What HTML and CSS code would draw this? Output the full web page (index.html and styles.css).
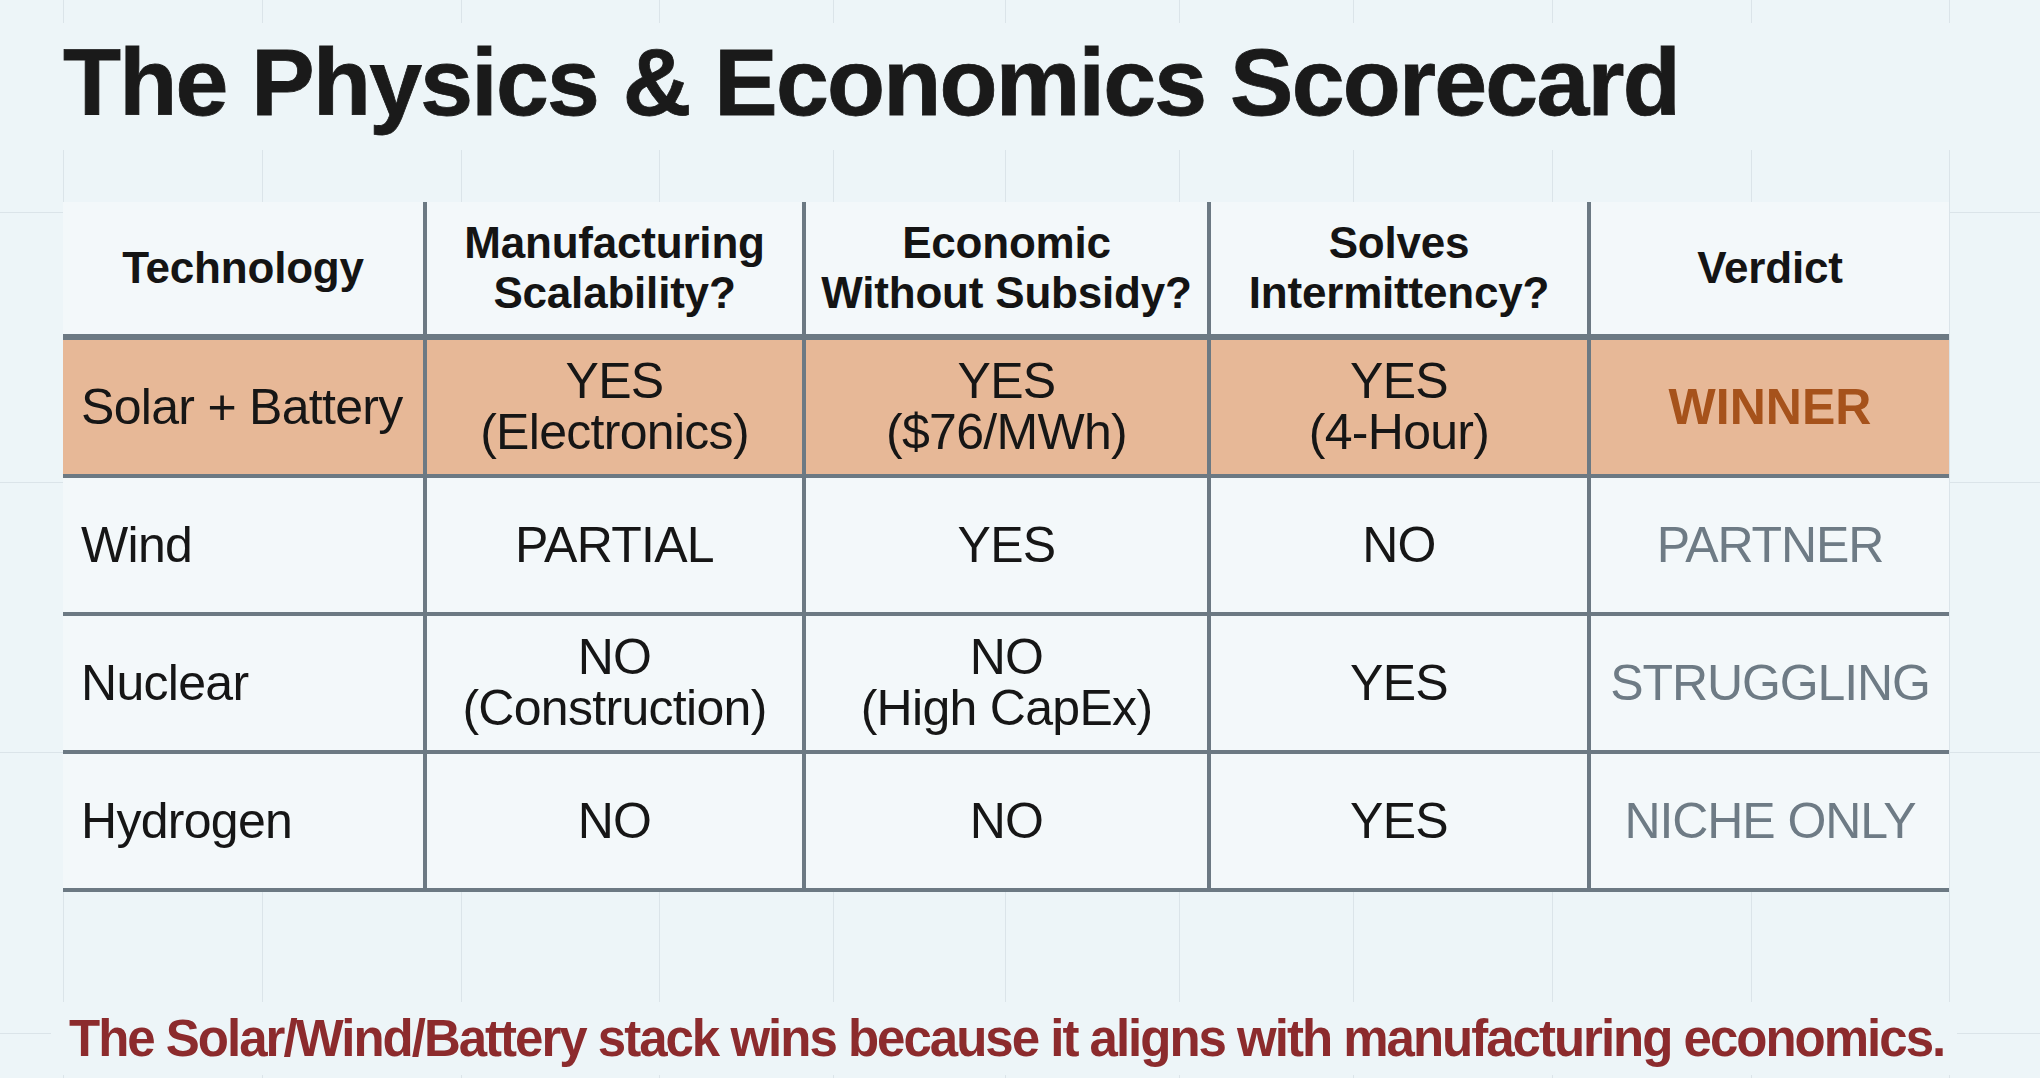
FILE: index.html
```html
<!DOCTYPE html>
<html lang="en">
<head>
<meta charset="utf-8">
<title>The Physics &amp; Economics Scorecard</title>
<link rel="stylesheet" href="styles.css">
</head>
<body>
<main class="slide">
  <header class="title-band">
    <h1 class="title">The Physics &amp; Economics Scorecard</h1>
  </header>

  <div class="scorecard">
    <div class="cell head">Technology</div>
    <div class="cell head">Manufacturing<br>Scalability?</div>
    <div class="cell head">Economic<br>Without Subsidy?</div>
    <div class="cell head">Solves<br>Intermittency?</div>
    <div class="cell head">Verdict</div>

    <div class="cell hl tech">Solar + Battery</div>
    <div class="cell hl">YES<br>(Electronics)</div>
    <div class="cell hl">YES<br>($76/MWh)</div>
    <div class="cell hl">YES<br>(4-Hour)</div>
    <div class="cell hl verdict winner">WINNER</div>

    <div class="cell tech">Wind</div>
    <div class="cell">PARTIAL</div>
    <div class="cell">YES</div>
    <div class="cell">NO</div>
    <div class="cell verdict">PARTNER</div>

    <div class="cell tech">Nuclear</div>
    <div class="cell">NO<br>(Construction)</div>
    <div class="cell">NO<br>(High CapEx)</div>
    <div class="cell">YES</div>
    <div class="cell verdict">STRUGGLING</div>

    <div class="cell tech">Hydrogen</div>
    <div class="cell">NO</div>
    <div class="cell">NO</div>
    <div class="cell">YES</div>
    <div class="cell verdict">NICHE ONLY</div>
  </div>

  <p class="takeaway">The Solar/Wind/Battery stack wins because it aligns with manufacturing economics.</p>
</main>
</body>
</html>
```

FILE: styles.css
```css
html, body {
  margin: 0;
  padding: 0;
}

body {
  width: 2040px;
  height: 1078px;
  overflow: hidden;
  font-family: "Liberation Sans", Arial, Helvetica, sans-serif;
  color: #161616;
  background-color: #edf5f8;
  background-repeat: no-repeat;
  background-image:
    linear-gradient(#dbe4e9, #dbe4e9),
    linear-gradient(#dbe4e9, #dbe4e9),
    linear-gradient(#dbe4e9, #dbe4e9),
    linear-gradient(#dbe4e9, #dbe4e9),
    linear-gradient(#dbe4e9, #dbe4e9),
    linear-gradient(#dbe4e9, #dbe4e9),
    linear-gradient(#dbe4e9, #dbe4e9),
    linear-gradient(#dbe4e9, #dbe4e9),
    linear-gradient(#dbe4e9, #dbe4e9),
    linear-gradient(#dbe4e9, #dbe4e9),
    linear-gradient(#dbe4e9, #dbe4e9),
    linear-gradient(#dbe4e9, #dbe4e9),
    linear-gradient(#dbe4e9, #dbe4e9),
    linear-gradient(#dbe4e9, #dbe4e9),
    linear-gradient(#dbe4e9, #dbe4e9);
  background-size:
    1px 100%, 1px 100%, 1px 100%, 1px 100%, 1px 100%, 1px 100%,
    1px 100%, 1px 100%, 1px 100%, 1px 100%, 1px 100%,
    100% 1px, 100% 1px, 100% 1px, 100% 1px;
  background-position:
    63px 0, 262px 0, 461px 0, 659px 0, 833px 0, 1005px 0,
    1179px 0, 1353px 0, 1552px 0, 1751px 0, 1949px 0,
    0 212px, 0 482px, 0 752px, 0 1033px;
}

.slide {
  display: flex;
  flex-direction: column;
  align-items: flex-start;
  padding-top: 23px;
}

.title-band {
  box-sizing: border-box;
  margin-left: 50px;
  width: 1912px;
  height: 127px;
  padding: 9px 0 0 13px;
  background: #edf5f8;
}

.title {
  margin: 0;
  font-size: 95px;
  line-height: 100px;
  font-weight: 700;
  letter-spacing: -1.75px;
  color: #1a1a1a;
  -webkit-text-stroke: 0.8px #1a1a1a;
  white-space: nowrap;
}

.scorecard {
  margin-top: 52px;
  margin-left: 63px;
  width: 1886px;
  display: grid;
  grid-template-columns: 364px 379px 405px 380px 358px;
  grid-auto-rows: 138px;
  background: #f3f8fa;
}

.cell {
  box-sizing: border-box;
  display: flex;
  align-items: center;
  justify-content: center;
  text-align: center;
  border-right: 4px solid #6c7983;
  border-bottom: 4px solid #6c7983;
  font-size: 50px;
  line-height: 51px;
  letter-spacing: -0.7px;
  color: #161616;
  white-space: nowrap;
}

.cell:nth-child(5n) {
  border-right: none;
}

.head {
  border-bottom-width: 6px;
  font-size: 44px;
  line-height: 50px;
  font-weight: 700;
  letter-spacing: -0.2px;
  color: #141414;
}

.hl {
  background: #e7b897;
}

.tech {
  justify-content: flex-start;
  text-align: left;
  padding-left: 18px;
}

.verdict {
  color: #6e7b85;
  letter-spacing: -1.1px;
}

.winner {
  color: #a6521b;
  font-weight: 700;
  letter-spacing: 0;
}

.takeaway {
  box-sizing: border-box;
  margin: 110px 0 0 51px;
  width: 1906px;
  height: 73px;
  padding-left: 18px;
  background: #edf5f8;
  font-size: 51px;
  line-height: 73px;
  font-weight: 700;
  letter-spacing: -2px;
  color: #8c2b2d;
  white-space: nowrap;
}
```
